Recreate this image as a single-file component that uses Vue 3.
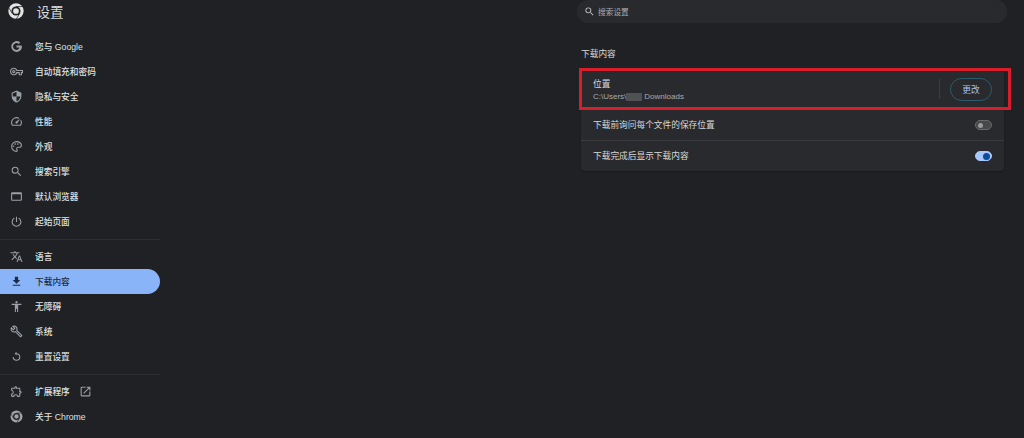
<script setup>
const G1 = [
  { label: '您与 Google', icon: 'google' },
  { label: '自动填充和密码', icon: 'key' },
  { label: '隐私与安全', icon: 'shield' },
  { label: '性能', icon: 'gauge' },
  { label: '外观', icon: 'palette' },
  { label: '搜索引擎', icon: 'search' },
  { label: '默认浏览器', icon: 'browser' },
  { label: '起始页面', icon: 'power' }
]
const G2 = [
  { label: '语言', icon: 'lang' },
  { label: '下载内容', icon: 'download', active: true },
  { label: '无障碍', icon: 'person' },
  { label: '系统', icon: 'wrench' },
  { label: '重置设置', icon: 'reset' }
]
const G3 = [
  { label: '扩展程序', icon: 'ext', external: true },
  { label: '关于 Chrome', icon: 'chrome' }
]
const groups = [G1, G2, G3]
const paths = {
  google: 'M21.350 10.100H12v3.900h5.350c-.6 2.700-2.800 4.300-5.350 4.300a6.300 6.300 0 1 1 4.100-11.100l2.800-2.800A10 10 0 1 0 12 22c5.300 0 10-3.800 10-10 0-.6-.1-1.300-.650-1.900z',
  key: 'M22 19h-6v-4h-2.680c-1.140 2.420-3.600 4-6.320 4-3.860 0-7-3.140-7-7s3.140-7 7-7c2.720 0 5.170 1.580 6.320 4H24v6h-2v4zm-4-2h2v-4h2v-2H11.660l-.230-.670C10.730 8.340 8.860 7 7 7c-2.760 0-5 2.240-5 5s2.240 5 5 5c1.860 0 3.730-1.340 4.430-3.330l.230-.670H18v4zM7 15c-1.650 0-3-1.350-3-3s1.350-3 3-3 3 1.350 3 3-1.350 3-3 3zm0-4c-.550 0-1 .450-1 1s.450 1 1 1 1-.450 1-1-.450-1-1-1z',
  shield: 'M12 1 3 5v6c0 5.550 3.840 10.740 9 12 5.160-1.260 9-6.450 9-12V5l-9-4zm0 10.990h7c-.530 4.120-3.280 7.790-7 8.940V12H5V6.300l7-3.110v8.800z',
  gauge: 'M20.380 8.570l-1.230 1.850a8 8 0 0 1-.220 7.580H5.070A8 8 0 0 1 15.580 6.850l1.850-1.230A10 10 0 0 0 3.350 19a2 2 0 0 0 1.720 1h13.850a2 2 0 0 0 1.740-1 10 10 0 0 0-.270-10.440zm-9.790 6.840a2 2 0 0 0 2.830 0l5.660-8.490-8.490 5.660a2 2 0 0 0 0 2.830z',
  palette: 'M12 2a10 10 0 0 0 0 20c1.400 0 2.500-1.100 2.500-2.500 0-.6-.3-1.200-.7-1.700-.3-.4-.5-.8-.5-1.300 0-1.100.9-2 2-2H17a5 5 0 0 0 5-5c0-4.100-4.500-7.500-10-7.500zm0 2c4.400 0 8 2.500 8 5.500 0 1.600-1.400 3-3 3h-1.700a4 4 0 0 0-4 4c0 1 .4 1.900 1 2.600.1.100.2.300.2.400 0 .3-.2.500-.5.500a8 8 0 0 1 0-16zM6.500 10a1.500 1.500 0 1 0 0 3 1.500 1.500 0 0 0 0-3zm3-4a1.500 1.500 0 1 0 0 3 1.500 1.500 0 0 0 0-3zm5 0a1.500 1.500 0 1 0 0 3 1.500 1.500 0 0 0 0-3z',
  search: 'M15.500 14h-.790l-.280-.270A6.471 6.471 0 0 0 16 9.500 6.500 6.500 0 1 0 9.500 16c1.610 0 3.090-.590 4.230-1.570l.270.280v.790l5 4.990L20.490 19l-4.990-5zm-6 0C7.010 14 5 11.990 5 9.500S7.010 5 9.500 5 14 7.010 14 9.500 11.990 14 9.500 14z',
  browser: 'M20 4H4a2 2 0 0 0-2 2v12a2 2 0 0 0 2 2h16a2 2 0 0 0 2-2V6a2 2 0 0 0-2-2zm0 14H4V8h16v10z',
  power: 'M11 3h2v10h-2V3zm5.800 2.200-1.400 1.400A7 7 0 1 1 8.600 6.600L7.200 5.200a9 9 0 1 0 9.600 0z',
  lang: 'M12.870 15.070l-2.540-2.510.030-.030A17.520 17.520 0 0 0 14.070 6H17V4h-7V2H8v2H1v2h11.170C11.500 7.920 10.440 9.750 9 11.350 8.070 10.320 7.300 9.190 6.690 8h-2c.730 1.630 1.730 3.170 2.980 4.560l-5.090 5.020L4 19l5-5 3.110 3.110.760-2.040zM18.500 10h-2L12 22h2l1.120-3h4.750L21 22h2l-4.500-12zm-2.620 7 1.620-4.330L19.120 17h-3.240z',
  download: 'M5 20h14v-2H5v2zm14-11h-4V3H9v6H5l7 7 7-7z',
  person: 'M12 2c1.100 0 2 .9 2 2s-.9 2-2 2-2-.9-2-2 .9-2 2-2zm9 7h-6v13h-2v-6h-2v6H9V9H3V7h18v2z',
  wrench: 'M22.610 18.990l-9.080-9.080c.930-2.340.450-5.100-1.440-7C9.790.61 6.210.4 3.660 2.250L7.500 6.100 6.080 7.510 2.250 3.690C.4 6.230.610 9.820 2.910 12.110c1.860 1.860 4.570 2.350 6.880 1.480l9.110 9.110c.390.390 1.020.390 1.410 0l2.300-2.300c.400-.380.400-1.010 0-1.410zm-3 1.600l-9.460-9.460c-.610.450-1.290.720-2 .820-1.360.200-2.790-.210-3.830-1.250C3.370 9.760 2.930 8.500 3 7.260l3.090 3.090 4.240-4.240-3.090-3.090c1.240-.070 2.490.370 3.440 1.310 1.080 1.080 1.490 2.570 1.240 3.960-.120.710-.420 1.370-.880 1.960l9.450 9.450-.880.890z',
  reset: 'M12 6V3L8.500 6.500 12 10V8a5 5 0 1 1-5 5H5a7 7 0 1 0 7-7z',
  ext: 'M10.500 4.500c.280 0 .500.220.500.500v2h6v6h2c.280 0 .500.220.500.500s-.220.500-.500.500h-2v6h-2.120c-.680-1.750-2.390-3-4.380-3s-3.700 1.250-4.380 3H4v-2.120c1.750-.680 3-2.390 3-4.380 0-1.990-1.240-3.700-2.990-4.380L4 7h6V5c0-.280.220-.500.500-.500m0-2C9.120 2.500 8 3.620 8 5H4c-1.100 0-1.990.9-1.990 2v3.800h.490c1.490 0 2.700 1.210 2.700 2.700s-1.210 2.700-2.700 2.700H2V20c0 1.100.9 2 2 2h3.800v-.500c0-1.490 1.210-2.700 2.700-2.700s2.700 1.210 2.700 2.700v.500H17c1.100 0 2-.9 2-2v-4c1.380 0 2.500-1.120 2.500-2.500S20.380 11 19 11V7c0-1.100-.9-2-2-2h-4c0-1.380-1.120-2.500-2.500-2.500z'
}
</script>

<template>
  <div class="page">
    <aside class="side">
      <header class="brand">
        <svg class="logo" viewBox="0 0 24 24">
          <circle cx="12" cy="12" r="11.500" fill="#e3e3e3" />
          <circle cx="12" cy="12" r="6.800" fill="#202124" />
          <circle cx="12" cy="12" r="4.300" fill="#e3e3e3" />
          <path d="M12 5.300h11M6.100 15.400.6 6M17.900 15.400 12.400 24" stroke="#202124" stroke-width="1.100" fill="none" />
        </svg>
        <span class="title">设置</span>
      </header>
      <nav class="nav">
        <template v-for="(group, i) in groups" :key="i">
          <div v-if="i" class="rule"></div>
          <a v-for="item in group" :key="item.label" class="item" :class="{ active: item.active }">
            <svg v-if="item.icon === 'chrome'" class="ico" viewBox="0 0 24 24">
              <circle cx="12" cy="12" r="11" fill="#a0a3a7" />
              <circle cx="12" cy="12" r="6.400" fill="#202124" />
              <circle cx="12" cy="12" r="4" fill="#a0a3a7" />
              <path d="M12 5.600h10.500M6.500 15.200 1.200 6.200M17.500 15.200 12.400 23.500" stroke="#202124" stroke-width="1.100" fill="none" />
            </svg>
            <svg v-else class="ico" viewBox="0 0 24 24"><path :d="paths[item.icon]" fill="currentColor" fill-rule="evenodd" /></svg>
            <span>{{ item.label }}</span>
            <svg v-if="item.external" class="extlink" viewBox="0 0 24 24">
              <path d="M19 19H5V5h7V3H5a2 2 0 0 0-2 2v14a2 2 0 0 0 2 2h14a2 2 0 0 0 2-2v-7h-2v7zM14 3v2h3.600l-9.800 9.800 1.400 1.400L19 6.400V10h2V3h-7z" fill="currentColor" />
            </svg>
          </a>
        </template>
      </nav>
    </aside>

    <main class="main">
      <div class="search">
        <svg class="search-ico" viewBox="0 0 24 24"><path :d="paths.search" fill="currentColor" /></svg>
        <span>搜索设置</span>
      </div>
      <h2 class="heading">下载内容</h2>
      <section class="card">
        <div class="row first">
          <div class="stack">
            <div class="label">位置</div>
            <div class="path">C:\Users\<span class="mask"></span>Downloads</div>
          </div>
          <div class="vsep"></div>
          <button class="btn">更改</button>
        </div>
        <div class="row second">
          <span class="label">下载前询问每个文件的保存位置</span>
          <span class="toggle"><i></i></span>
        </div>
        <div class="row third">
          <span class="label">下载完成后显示下载内容</span>
          <span class="toggle on"><i></i></span>
        </div>
        <div class="callout"></div>
      </section>
    </main>
  </div>
</template>

<style>
html, body { margin: 0; background: #202124; overflow: hidden; }
</style>

<style scoped>
.page {
  width: 1024px;
  height: 438px;
  display: flex;
  overflow: hidden;
  background: #202124;
  color: #e3e3e3;
  font-family: "Noto Sans CJK SC", "Liberation Sans", sans-serif;
  font-size: 8.700px;
}
.side { width: 160px; flex: none; }
.brand { height: 24px; margin-top: -1px; display: flex; align-items: center; padding-left: 8px; gap: 12.500px; }
.logo { width: 16px; height: 16px; }
.title { font-size: 13.500px; color: #d8d9da; }
.nav { padding-top: 11px; }
.item {
  height: 25px;
  display: flex;
  align-items: center;
  gap: 12px;
  padding-left: 10px;
  color: #dfe1e3;
  font-family: "Liberation Sans", "Noto Sans CJK SC", sans-serif;
  font-weight: 500;
}
.ico { width: 13px; height: 13px; flex: none; color: #9aa0a6; }
.item.active { background: #8ab4f8; border-radius: 0 13px 13px 0; color: #202b40; }
.item.active .ico { color: #1b2a45; }
.extlink { width: 13px; height: 13px; color: #9aa0a6; margin-left: -3px; }
.rule { height: 1px; margin: 5px 0 4px; background: #2e2f32; }

.main { flex: none; width: 864px; padding-left: 421px; box-sizing: border-box; }
.search {
  width: 430px;
  height: 23px;
  margin-left: -4px;
  background: #292a2d;
  border-radius: 11px;
  display: flex;
  align-items: center;
  gap: 3px;
  padding-left: 7px;
  box-sizing: border-box;
  color: #a9abae;
  font-size: 7.700px;
}
.search-ico { width: 11px; height: 11px; color: #c0c2c5; }
.heading { margin: 23px 0 0; height: 22px; font-size: 8.700px; font-weight: 400; line-height: 15px; color: #d8d9da; }
.card {
  position: relative;
  width: 423px;
  height: 103px;
  background: #292a2d;
  border-radius: 4px;
  box-shadow: 0 1px 2px rgba(0,0,0,.3);
}
.row { display: flex; align-items: center; padding: 0 12px; box-sizing: border-box; justify-content: space-between; }
.first { height: 42px; }
.second { height: 31px; border-bottom: 1px solid #3c3d40; }
.third { height: 30px; }
.stack { flex: 1; padding-top: 2px; }
.label { color: #d8d9da; line-height: 12px; }
.path { color: #a9abae; line-height: 12px; margin-top: 1px; font-size: 8px; font-family: "Liberation Sans", sans-serif; display: flex; align-items: center; }
.mask { width: 16px; height: 8px; background: #505154; margin-right: 2px; }
.vsep { width: 1px; height: 20px; background: #3c3d40; margin-right: 10px; }
.btn {
  width: 42px;
  height: 23px;
  padding: 0;
  background: transparent;
  border: 1px solid #2b5b6c;
  border-radius: 12px;
  color: #a8c7fa;
  font: inherit;
  line-height: 21px;
}
.toggle { width: 17px; height: 10px; border-radius: 5px; background: #47484a; border: 1px solid #68696b; box-sizing: border-box; display: flex; align-items: center; padding-left: 2px; }
.toggle i { width: 5px; height: 5px; border-radius: 50%; background: #9a9b9d; }
.toggle.on { background: #a8c7fa; border-color: #a8c7fa; justify-content: flex-end; padding: 0 1px 0 0; }
.toggle.on i { width: 7px; height: 7px; background: #0b4a9c; }
.callout {
  position: absolute;
  left: -2px;
  top: 0;
  width: 432px;
  height: 42px;
  border: 3px solid #d61f2b;
  box-sizing: border-box;
  pointer-events: none;
}
</style>
